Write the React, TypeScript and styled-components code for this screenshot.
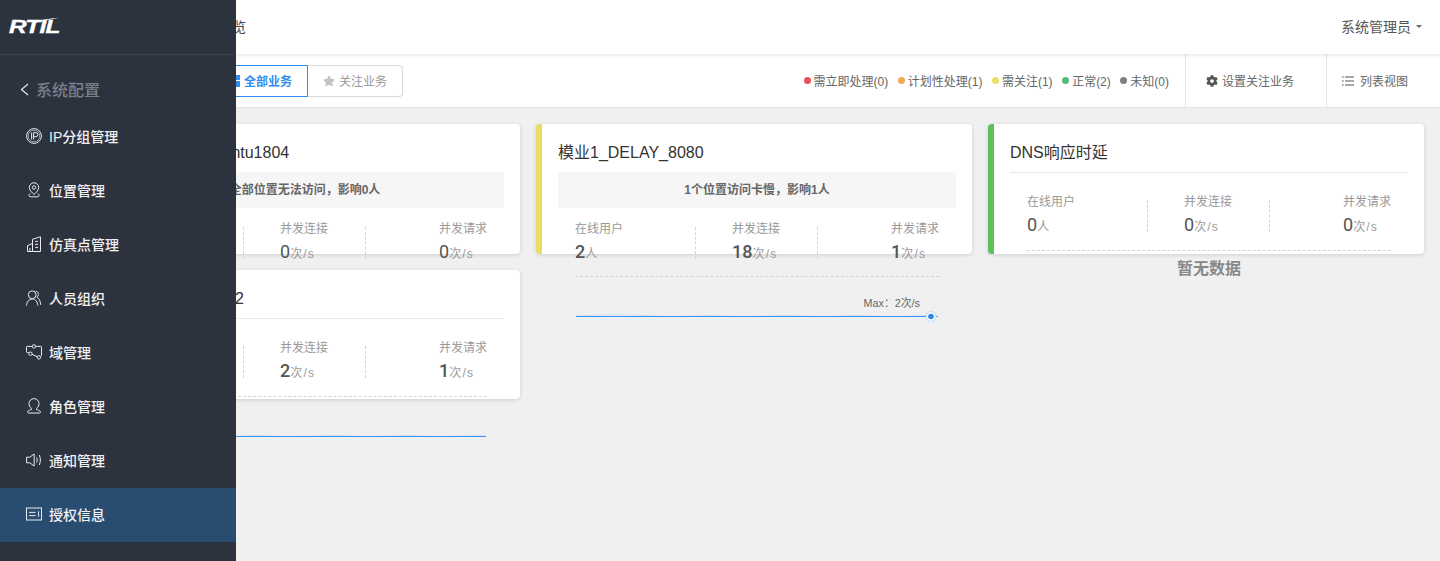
import React from "react";
import styled, { createGlobalStyle } from "styled-components";
import { FaStar, FaCog } from "react-icons/fa";

const fontStack = `"Liberation Sans", "Noto Sans CJK SC", sans-serif`;

const GlobalStyle = createGlobalStyle`
  html, body {
    margin: 0;
    padding: 0;
    height: 100%;
    background: #f0f0f0;
    font-family: ${fontStack};
    color: #555;
  }
  * {
    box-sizing: border-box;
  }
`;

const IpIcon = () => (
  <NavSvg viewBox="0 0 16 16">
    <circle cx="8" cy="8" r="7.4" />
    <circle cx="8" cy="8" r="5.8" strokeWidth="0.6" />
    <path d="M5.6 4.6v6.8M7.6 11.4V4.6h2.2a2 2 0 0 1 0 4.1H7.6" />
  </NavSvg>
);

const LocationIcon = () => (
  <NavSvg viewBox="0 0 16 16">
    <path d="M8 .8a4.7 4.7 0 0 1 4.7 4.7c0 2.8-2.8 5.1-4.7 7-1.9-1.9-4.7-4.2-4.7-7A4.7 4.7 0 0 1 8 .8z" />
    <circle cx="8" cy="5.5" r="1.7" />
    <path d="M4.4 11.6c-2 .8-2.1 3.2.3 3.2h6.6c2.4 0 2.3-2.4.3-3.2" />
  </NavSvg>
);

const BuildingIcon = () => (
  <NavSvg viewBox="0 0 16 16">
    <path d="M6.5 15.5V3.2L14.5.8v14.7zM6.5 15.5h-5V9.6l5-2.2" />
    <path d="M9.2 5.4h2.8M9.2 8.4h2.8M9.2 11.4h2.8M3.9 12v3.4" />
  </NavSvg>
);

const PeopleIcon = () => (
  <NavSvg viewBox="0 0 16 16">
    <circle cx="6.2" cy="4.8" r="3.9" />
    <path d="M.6 15.6c0-3.6 2.4-6.6 5.6-6.6s5.6 3 5.6 6.6" />
    <path d="M9.8 1.2c2.8.2 3.6 4.2 1 6 2.4 1.2 3.8 4.2 3.8 7.6" />
  </NavSvg>
);

const DomainIcon = () => (
  <NavSvg viewBox="0 0 16 16">
    <path d="M6.2 2.4H1.2A.7.7 0 0 0 .5 3.1v4.6c0 .5.3.8.7.8h1.6M9.6 2.4h5.2c.4 0 .7.3.7.7v8.4c0 .4-.3.7-.7.7h-.3" />
    <circle cx="7.9" cy="2.4" r="1.7" />
    <circle cx="4.4" cy="9.7" r="1.7" />
    <circle cx="12.9" cy="13.4" r="1.7" />
    <path d="M6 10.3l5.3 2.5" />
  </NavSvg>
);

const RoleIcon = () => (
  <NavSvg viewBox="0 0 16 16">
    <path d="M5.4 10.2C3.8 9.1 3 7.4 3 5.6 3 2.8 5.2.6 8 .6s5 2.2 5 5c0 1.8-.8 3.5-2.4 4.6v1.4c1.6.4 3 .9 3.6 1.6.6.8.2 1.8-.8 1.8H2.6c-1 0-1.4-1-.8-1.8.6-.7 2-1.2 3.6-1.6z" />
  </NavSvg>
);

const NoticeIcon = () => (
  <NavSvg viewBox="0 0 16 16">
    <path d="M.6 5.2h3.2L8.2 2v12L3.8 10.8H.6z" />
    <path d="M10.6 5.4c.8 1.6.8 3.6 0 5.2M13.2 3c1.6 3 1.6 7 0 10" />
  </NavSvg>
);

const LicenseIcon = () => (
  <NavSvg viewBox="0 0 16 16">
    <rect x="0.5" y="2" width="15" height="12" />
    <path d="M3 6.4h6.6M3 9.6h6.6M12.6 5.2v5.6" />
  </NavSvg>
);

const navItems = [
  { label: "IP分组管理", icon: <IpIcon /> },
  { label: "位置管理", icon: <LocationIcon /> },
  { label: "仿真点管理", icon: <BuildingIcon /> },
  { label: "人员组织", icon: <PeopleIcon /> },
  { label: "域管理", icon: <DomainIcon /> },
  { label: "角色管理", icon: <RoleIcon /> },
  { label: "通知管理", icon: <NoticeIcon /> },
  { label: "授权信息", icon: <LicenseIcon />, active: true },
];

const legend = [
  { color: "#e9505a", label: "需立即处理(0)" },
  { color: "#f3a958", label: "计划性处理(1)" },
  { color: "#ebdf66", label: "需关注(1)" },
  { color: "#55bb78", label: "正常(2)" },
  { color: "#7f7f7f", label: "未知(0)" },
];

type CardData = {
  title: string;
  bar: string;
  alert?: string;
  users: number;
  connections: number;
  requests: number;
  max?: string;
  dot?: boolean;
  empty?: boolean;
};

const firstColumn: CardData[] = [
  {
    title: "模拟业务-01_Ubuntu1804",
    bar: "#e9505a",
    alert: "全部位置无法访问，影响0人",
    users: 0,
    connections: 0,
    requests: 0,
  },
  {
    title: "模业1_HTTPS_082",
    bar: "#5cc15c",
    users: 1,
    connections: 2,
    requests: 1,
  },
];

const secondColumn: CardData[] = [
  {
    title: "模业1_DELAY_8080",
    bar: "#e9dc62",
    alert: "1个位置访问卡慢，影响1人",
    users: 2,
    connections: 18,
    requests: 1,
    max: "Max：2次/s",
    dot: true,
  },
];

const thirdColumn: CardData[] = [
  {
    title: "DNS响应时延",
    bar: "#5cc15c",
    users: 0,
    connections: 0,
    requests: 0,
    empty: true,
  },
];

const MonitorCard: React.FC<{ data: CardData }> = ({ data }) => (
  <Card $bar={data.bar}>
    <CardTitle $ruled={!data.alert}>{data.title}</CardTitle>
    {data.alert && <AlertBar>{data.alert}</AlertBar>}
    <CardBody $tight={!!data.alert}>
      <StatsRow $tight={!!data.alert}>
        <Stat>
          <StatLabel>在线用户</StatLabel>
          <StatValue>
            <StatNumber $strong={data.users > 0}>{data.users}</StatNumber>
            <StatUnit>人</StatUnit>
          </StatValue>
        </Stat>
        <Stat $divided $indent={37}>
          <StatLabel>并发连接</StatLabel>
          <StatValue>
            <StatNumber $strong={data.connections > 0}>{data.connections}</StatNumber>
            <StatUnit>次/s</StatUnit>
          </StatValue>
        </Stat>
        <Stat $divided $indent={74}>
          <StatLabel>并发请求</StatLabel>
          <StatValue>
            <StatNumber $strong={data.requests > 0}>{data.requests}</StatNumber>
            <StatUnit>次/s</StatUnit>
          </StatValue>
        </Stat>
      </StatsRow>
      {data.empty ? (
        <EmptyText>暂无数据</EmptyText>
      ) : (
        <Chart>
          <MaxLabel>{data.max ?? "\u00a0"}</MaxLabel>
          <ChartSvg viewBox="0 0 364 12" preserveAspectRatio="none">
            <path
              d="M1 6C30 4.4 50 4.4 80 6s40-1.4 70 0 50-1.4 80 0 40-1.4 70 0 40-1.2 63 0"
              fill="none"
              stroke="#8cc0f8"
              strokeWidth="1"
              opacity="0.35"
            />
            <path d="M1 6.5h362" fill="none" stroke="#3a93f5" strokeWidth="1" />
            {data.dot && (
              <>
                <circle cx="356" cy="6.5" r="5.5" fill="#c4dcfa" />
                <circle cx="356" cy="6.5" r="4.3" fill="#fff" />
                <circle cx="356" cy="6.5" r="2.8" fill="#2f86ee" />
              </>
            )}
          </ChartSvg>
        </Chart>
      )}
    </CardBody>
  </Card>
);

const App: React.FC = () => {
  return (
    <Page>
      <GlobalStyle />
      <Main>
        <TopBar>
          <PageTitle>业务总览</PageTitle>
          <UserMenu>
            系统管理员
            <Caret />
          </UserMenu>
        </TopBar>
        <Toolbar>
          <Tabs>
            <Tab $active>
              <GridGlyph />
              全部业务
            </Tab>
            <Tab>
              <FaStar size={12} color="#c4c4c4" />
              关注业务
            </Tab>
          </Tabs>
          <ToolbarRight>
            <Legend>
              {legend.map((item) => (
                <LegendItem key={item.label}>
                  <LegendDot $color={item.color} />
                  {item.label}
                </LegendItem>
              ))}
            </Legend>
            <ToolCell $left={20}>
              <FaCog size={12} color="#555" />
              设置关注业务
            </ToolCell>
            <ToolCell $left={15}>
              <ListSvg viewBox="0 0 12 12">
                <path d="M0 2h1.6M3 2h9M0 6h1.6M3 6h9M0 10h1.6M3 10h9" />
              </ListSvg>
              列表视图
            </ToolCell>
          </ToolbarRight>
        </Toolbar>
        <Board>
          <Column>
            {firstColumn.map((card) => (
              <MonitorCard key={card.title} data={card} />
            ))}
          </Column>
          <Column>
            {secondColumn.map((card) => (
              <MonitorCard key={card.title} data={card} />
            ))}
          </Column>
          <Column>
            {thirdColumn.map((card) => (
              <MonitorCard key={card.title} data={card} />
            ))}
          </Column>
        </Board>
      </Main>
      <Sidebar>
        <LogoBar>
          <Logo>
            <LogoText>RTIL</LogoText>
            <LogoSwoosh viewBox="0 0 48 6">
              <path d="M22 5C32 2.6 40 1.4 48 .8 40 2.4 32 3.6 24 6z" fill="#fff" />
            </LogoSwoosh>
          </Logo>
        </LogoBar>
        <BackRow>
          <BackChevron viewBox="0 0 9 13">
            <path d="M8 1L1.5 6.5 8 12" />
          </BackChevron>
          系统配置
        </BackRow>
        <nav>
          {navItems.map((item) => (
            <NavItem key={item.label} $active={item.active}>
              {item.icon}
              {item.label}
            </NavItem>
          ))}
        </nav>
      </Sidebar>
    </Page>
  );
};

const Page = styled.div`
  position: relative;
  width: 100%;
  height: 100vh;
  overflow: hidden;
  background: #f0f0f0;
`;

const Main = styled.main`
  display: flex;
  flex-direction: column;
  height: 100%;
`;

const TopBar = styled.header`
  display: flex;
  align-items: center;
  justify-content: space-between;
  flex: none;
  height: 54px;
  padding: 0 18px 2px 190px;
  background: #fff;
  box-shadow: 0 1px 4px rgba(0, 0, 0, 0.12);
  position: relative;
`;

const PageTitle = styled.div`
  font-size: 14px;
  color: #444;
`;

const UserMenu = styled.div`
  display: flex;
  align-items: center;
  font-size: 14px;
  color: #555;
`;

const Caret = styled.span`
  width: 0;
  height: 0;
  margin-left: 5px;
  border-left: 3px solid transparent;
  border-right: 3px solid transparent;
  border-top: 3px solid #666;
`;

const Toolbar = styled.div`
  display: flex;
  align-items: stretch;
  justify-content: space-between;
  flex: none;
  height: 54px;
  padding-left: 212px;
  background: #fff;
  border-bottom: 1px solid #e2e2e2;
`;

const Tabs = styled.div`
  display: flex;
  align-items: center;
`;

const Tab = styled.div<{ $active?: boolean }>`
  display: flex;
  align-items: center;
  gap: 4px;
  height: 32px;
  padding: 0 15px;
  font-size: 12px;
  font-weight: ${(p) => (p.$active ? 700 : 400)};
  color: ${(p) => (p.$active ? "#2f8cf0" : "#999")};
  border: 1px solid ${(p) => (p.$active ? "#2f8cf0" : "#d9d9d9")};
  border-left-width: ${(p) => (p.$active ? "1px" : "0")};
  border-radius: ${(p) => (p.$active ? "4px 0 0 4px" : "0 4px 4px 0")};
`;

const GridGlyph = styled.span`
  width: 12px;
  height: 12px;
  background:
    linear-gradient(#fff, #fff) center / 100% 1px no-repeat,
    linear-gradient(#fff, #fff) center / 1px 100% no-repeat,
    #2f8cf0;
`;

const ToolbarRight = styled.div`
  display: flex;
  align-items: stretch;
`;

const Legend = styled.div`
  display: flex;
  align-items: center;
  gap: 9.5px;
  padding-right: 16px;
`;

const LegendItem = styled.div`
  display: flex;
  align-items: center;
  font-size: 12px;
  color: #666;
`;

const LegendDot = styled.span<{ $color: string }>`
  width: 7px;
  height: 7px;
  margin-right: 3px;
  border-radius: 50%;
  background: ${(p) => p.$color};
`;

const ToolCell = styled.div<{ $left: number }>`
  display: flex;
  align-items: center;
  gap: 4px;
  padding: 0 32px 0 ${(p) => p.$left}px;
  font-size: 12px;
  color: #666;
  border-left: 1px solid #e6e6e6;
`;

const ListSvg = styled.svg`
  width: 12px;
  height: 12px;
  margin-right: 2px;
  fill: none;
  stroke: #555;
  stroke-width: 1.2;
`;

const Board = styled.div`
  display: grid;
  grid-template-columns: repeat(3, 436px);
  gap: 16px;
  flex: 1;
  padding: 16px 0 0 84px;
  align-items: start;
`;

const Column = styled.div`
  display: flex;
  flex-direction: column;
  gap: 16px;
`;

const Card = styled.section<{ $bar: string }>`
  height: 129.5px;
  padding: 0 16px;
  background: #fff;
  border-left: 6px solid ${(p) => p.$bar};
  border-radius: 4px;
  box-shadow: 0 1px 4px rgba(0, 0, 0, 0.14);
`;

const CardTitle = styled.div<{ $ruled: boolean }>`
  height: ${(p) => (p.$ruled ? "49px" : "48px")};
  padding-top: 9px;
  font-size: 16px;
  line-height: 40px;
  color: #333;
  white-space: nowrap;
  border-bottom: ${(p) => (p.$ruled ? "1px solid #e8e8e8" : "none")};
`;

const AlertBar = styled.div`
  height: 36px;
  font-size: 12px;
  font-weight: 700;
  line-height: 36px;
  text-align: center;
  color: #666;
  background: #f6f6f6;
  border-radius: 2px;
`;

const CardBody = styled.div<{ $tight: boolean }>`
  margin: ${(p) => (p.$tight ? "11px" : "19px")} 17px 0;
`;

const StatsRow = styled.div<{ $tight: boolean }>`
  display: grid;
  grid-template-columns: 120px 122px 1fr;
  height: ${(p) => (p.$tight ? "58px" : "59px")};
  border-bottom: 1px dashed #d4d4d4;
`;

const Stat = styled.div<{ $divided?: boolean; $indent?: number }>`
  position: relative;
  padding-left: ${(p) => p.$indent ?? 0}px;

  ${(p) =>
    p.$divided &&
    `
    &::before {
      content: "";
      position: absolute;
      left: 0;
      top: 8px;
      height: 32px;
      border-left: 1px dashed #d4d4d4;
    }
  `}
`;

const StatLabel = styled.div`
  height: 20px;
  font-size: 12px;
  line-height: 20px;
  color: #999;
  white-space: nowrap;
`;

const StatValue = styled.div`
  height: 26px;
  line-height: 26px;
  white-space: nowrap;
`;

const StatNumber = styled.span<{ $strong: boolean }>`
  font-family: Roboto, ${fontStack};
  font-size: 18px;
  font-weight: ${(p) => (p.$strong ? 500 : 400)};
  color: #555;
`;

const StatUnit = styled.span`
  font-size: 12px;
  color: #999;
  letter-spacing: 1.2px;
`;

const EmptyText = styled.div`
  margin-top: 6px;
  font-size: 16px;
  font-weight: 700;
  line-height: 24px;
  text-align: center;
  color: #888;
`;

const Chart = styled.div`
  padding-top: 20px;
`;

const MaxLabel = styled.div`
  height: 13px;
  padding-right: 19px;
  font-size: 10.8px;
  line-height: 13px;
  text-align: right;
  color: #666;
`;

const ChartSvg = styled.svg`
  display: block;
  width: 364px;
  height: 12px;
  overflow: visible;
`;

const Sidebar = styled.aside`
  position: absolute;
  top: 0;
  left: 0;
  bottom: 0;
  width: 236px;
  background: #2c333f;
`;

const LogoBar = styled.div`
  display: flex;
  align-items: center;
  height: 55px;
  padding-left: 9px;
  border-bottom: 1px solid #3c434f;
`;

const Logo = styled.div`
  position: relative;
  width: 48px;
  height: 16px;
`;

const LogoText = styled.span`
  display: block;
  font-size: 19px;
  font-weight: 700;
  font-style: italic;
  line-height: 16px;
  letter-spacing: -0.6px;
  color: #fff;
  -webkit-text-stroke: 0.4px #fff;
  transform: scaleX(1.28);
  transform-origin: left center;
`;

const LogoSwoosh = styled.svg`
  position: absolute;
  left: 2px;
  top: -2px;
  width: 48px;
  height: 6px;
`;

const BackRow = styled.div`
  display: flex;
  align-items: center;
  height: 40px;
  margin-top: 14px;
  padding-left: 20px;
  font-size: 16px;
  font-weight: 500;
  color: #7a808a;
`;

const BackChevron = styled.svg`
  width: 9px;
  height: 13px;
  margin-right: 7px;
  fill: none;
  stroke: #e6e8eb;
  stroke-width: 1.2;
`;

const NavItem = styled.div<{ $active?: boolean }>`
  display: flex;
  align-items: center;
  gap: 7px;
  height: 54px;
  padding: 0 0 2px 26px;
  font-size: 14px;
  font-weight: 500;
  color: #f0f1f3;
  background: ${(p) => (p.$active ? "#294d70" : "transparent")};

  &:first-child {
    margin-top: 1px;
  }
`;

const NavSvg = styled.svg`
  flex: none;
  width: 16px;
  height: 16px;
  fill: none;
  stroke: #e8eaed;
  stroke-width: 1;
`;

export default App;
